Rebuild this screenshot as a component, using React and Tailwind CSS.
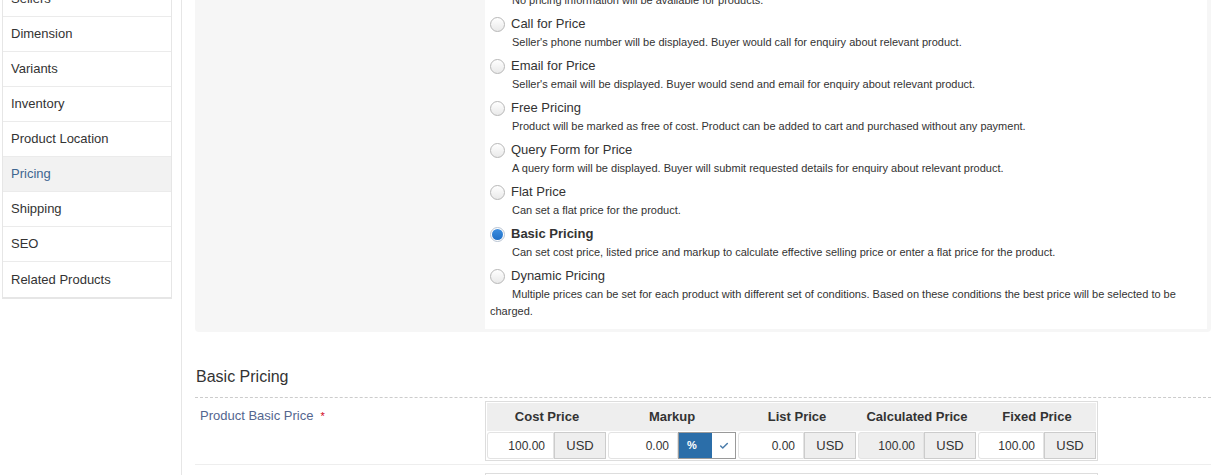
import { Check } from 'lucide-react';

const navItems = [
  'Sellers',
  'Dimension',
  'Variants',
  'Inventory',
  'Product Location',
  'Pricing',
  'Shipping',
  'SEO',
  'Related Products',
];

const pricingOptions = [
  {
    label: 'No Pricing',
    desc: 'No pricing information will be available for products.',
  },
  {
    label: 'Call for Price',
    desc: "Seller's phone number will be displayed. Buyer would call for enquiry about relevant product.",
  },
  {
    label: 'Email for Price',
    desc: "Seller's email will be displayed. Buyer would send and email for enquiry about relevant product.",
  },
  {
    label: 'Free Pricing',
    desc: 'Product will be marked as free of cost. Product can be added to cart and purchased without any payment.',
  },
  {
    label: 'Query Form for Price',
    desc: 'A query form will be displayed. Buyer will submit requested details for enquiry about relevant product.',
  },
  {
    label: 'Flat Price',
    desc: 'Can set a flat price for the product.',
  },
  {
    label: 'Basic Pricing',
    desc: 'Can set cost price, listed price and markup to calculate effective selling price or enter a flat price for the product.',
    selected: true,
  },
  {
    label: 'Dynamic Pricing',
    desc: 'Multiple prices can be set for each product with different set of conditions. Based on these conditions the best price will be selected to be charged.',
  },
];

function Radio({ checked }) {
  if (checked) {
    return (
      <span className="w-[15px] h-[15px] rounded-full border border-[#b9c4d2] bg-white flex items-center justify-center shrink-0">
        <span className="w-[11px] h-[11px] rounded-full bg-gradient-to-b from-[#3c8ee0] to-[#1f6fc6]" />
      </span>
    );
  }
  return (
    <span className="w-[15px] h-[15px] rounded-full border border-[#b7b7b7] bg-gradient-to-b from-white to-[#e9e9e9] shrink-0" />
  );
}

function PriceInput({ value, disabled }) {
  return (
    <div
      className={`flex-1 h-[27px] flex items-center justify-end pr-[8px] border border-[#e3e3e3] rounded-l-[3px] text-[12px] ${
        disabled ? 'bg-[#eeeeee]' : 'bg-white'
      }`}
    >
      {value}
    </div>
  );
}

function UsdAddon() {
  return (
    <div className="w-[52px] h-[27px] flex items-center justify-center bg-[#eeeeee] border border-[#cccccc] text-[13px]">
      USD
    </div>
  );
}

export default function App() {
  return (
    <div className="h-[475px] overflow-hidden bg-white font-['Liberation_Sans',Arial,sans-serif] text-[#333]">
      <div className="flex items-start">
        {/* Sidebar */}
        <aside className="w-[181px] shrink-0 pl-[2px] pr-[9px]">
          <ul className="-mt-[19px] border border-b-2 border-[#e6e6e6]">
            {navItems.map((item, i) => (
              <li
                key={item}
                className={`h-[35px] pl-[8px] flex items-center text-[13px] ${
                  i < navItems.length - 1 ? 'border-b border-[#ebebeb]' : ''
                } ${item === 'Pricing' ? 'bg-[#f2f2f2] text-[#3f6690]' : ''}`}
              >
                {item}
              </li>
            ))}
          </ul>
        </aside>

        {/* Main */}
        <main className="flex-1 min-h-[600px] border-l border-[#e6e6e6] pl-[13px] pr-[3px]">
          {/* Pricing type panel */}
          <div className="-mt-[40px] bg-[#f6f6f6] rounded-[4px] pl-[290px] pr-[4px] pt-[5px] pb-[3px]">
            <div className="bg-white pl-[5px] pr-[20px] pt-[7px] pb-[9px]">
              {pricingOptions.map((opt) => (
                <div key={opt.label} className="mb-[5px] last:mb-0">
                  <div className="h-[20px] flex items-center gap-[6px]">
                    <Radio checked={opt.selected} />
                    <span className={`text-[13px] ${opt.selected ? 'font-bold' : ''}`}>
                      {opt.label}
                    </span>
                  </div>
                  <p className="text-[11px] leading-[17px] indent-[22px]">{opt.desc}</p>
                </div>
              ))}
            </div>
          </div>

          {/* Basic Pricing section */}
          <h3 className="mt-[34px] pl-[1px] text-[16px] leading-[22px] pb-[9px] border-b border-dashed border-[#cccccc]">
            Basic Pricing
          </h3>

          <div className="flex border-b border-[#eeeeee] pb-[3px]">
            <div className="w-[290px] shrink-0 pl-[5px] pt-[9px] text-[13px] leading-[18px] text-[#54668f]">
              Product Basic Price
              <span className="text-[#d0021b] ml-[7px] text-[11px]">*</span>
            </div>
            <div className="mt-[3px] w-[613px] border border-[#dddddd] p-[1px]">
              <div className="grid grid-cols-[120px_130px_120px_120px_120px] bg-[#eeeeee] h-[28px] items-center text-[13px] font-bold text-center">
                <div>Cost Price</div>
                <div>Markup</div>
                <div>List Price</div>
                <div>Calculated Price</div>
                <div>Fixed Price</div>
              </div>
              <div className="grid grid-cols-[120px_130px_120px_120px_120px] pt-[1px]">
                <div className="flex pr-[1px]">
                  <PriceInput value="100.00" />
                  <UsdAddon />
                </div>
                <div className="flex px-[1px]">
                  <PriceInput value="0.00" />
                  <div className="flex h-[27px] border border-[#9a9a9a]">
                    <div className="w-[33px] bg-[#2b6ea9] text-white text-[11px] font-bold flex items-center pl-[8px]">
                      %
                    </div>
                    <div className="w-[23px] bg-white flex items-center justify-center">
                      <Check className="w-[10px] h-[10px] text-[#4a7cab]" strokeWidth={3.5} />
                    </div>
                  </div>
                </div>
                <div className="flex px-[1px]">
                  <PriceInput value="0.00" />
                  <UsdAddon />
                </div>
                <div className="flex px-[1px]">
                  <PriceInput value="100.00" disabled />
                  <UsdAddon />
                </div>
                <div className="flex pl-[1px] pr-[1px]">
                  <PriceInput value="100.00" />
                  <UsdAddon />
                </div>
              </div>
            </div>
          </div>

          <div className="flex pt-[8px]">
            <div className="w-[290px] shrink-0" />
            <div className="w-[613px] h-[20px] border border-[#dddddd]" />
          </div>
        </main>
      </div>
    </div>
  );
}
